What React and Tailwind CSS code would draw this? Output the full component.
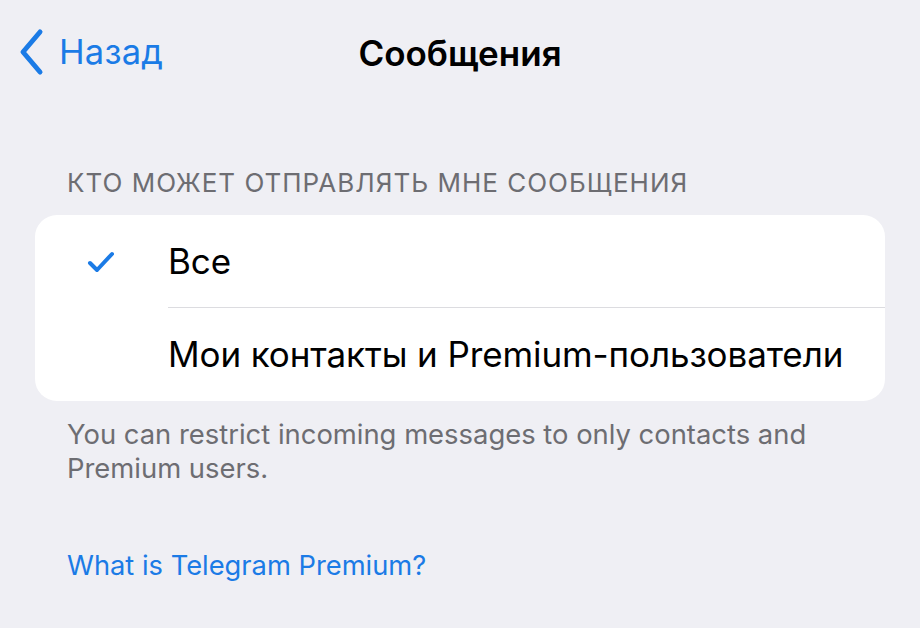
import React from 'react'

const font = { fontFamily: 'Inter, "Noto Sans", sans-serif' }

function BackButton() {
  return (
    <button className="flex items-center gap-[15px] text-[#1b7be6]">
      <svg width="26" height="48" viewBox="0 0 26 48" fill="none">
        <path d="M22 4 L5 24 L22 44" stroke="currentColor" strokeWidth="5" strokeLinecap="round" strokeLinejoin="round" />
      </svg>
      <span className="text-[34.5px] leading-none tracking-[0.2px]">Назад</span>
    </button>
  )
}

function Option({ label, checked, last }) {
  return (
    <div className="flex h-[93px] items-stretch">
      <div className="flex w-[133px] items-center justify-center">
        {checked && (
          <svg width="30" height="24" viewBox="0 0 30 24" fill="none" className="ml-[-2px]">
            <path d="M4 13 L11 20 L26 4" stroke="#1b7be6" strokeWidth="4" strokeLinecap="round" strokeLinejoin="round" />
          </svg>
        )}
      </div>
      <div className={`flex flex-1 items-center ${last ? '' : 'border-b-[1.5px] border-[#dcdce0]'}`}>
        <span className="text-[35px] leading-none text-black tracking-[-0.1px]">{label}</span>
      </div>
    </div>
  )
}

export default function App() {
  return (
    <div className="h-[628px] w-[920px] overflow-hidden bg-[#efeff4]" style={font}>
      {/* Nav bar */}
      <div className="relative flex h-[106px] items-center px-[18px] pb-[2px]">
        <BackButton />
        <div className="absolute inset-x-0 top-[36px] text-center text-[35px] font-semibold leading-none text-black">
          Сообщения
        </div>
      </div>

      <div className="pt-[64px]">
        <div className="px-[67px] text-[26px] leading-none tracking-[1px] text-[#6d6d72]">
          КТО МОЖЕТ ОТПРАВЛЯТЬ МНЕ СООБЩЕНИЯ
        </div>

        <div className="mx-[35px] mt-[19px] overflow-hidden rounded-[22px] bg-white">
          <Option label="Все" checked />
          <Option label="Мои контакты и Premium-пользователи" last />
        </div>

        <div className="mt-[16px] px-[67px] text-[27.4px] leading-[34px] text-[#6d6d72]">
          You can restrict incoming messages to only contacts and<br />Premium users.
        </div>

        <div className="mt-[67px] px-[67px] text-[27.3px] leading-none text-[#1b7be6]">
          What is Telegram Premium?
        </div>
      </div>
    </div>
  )
}
